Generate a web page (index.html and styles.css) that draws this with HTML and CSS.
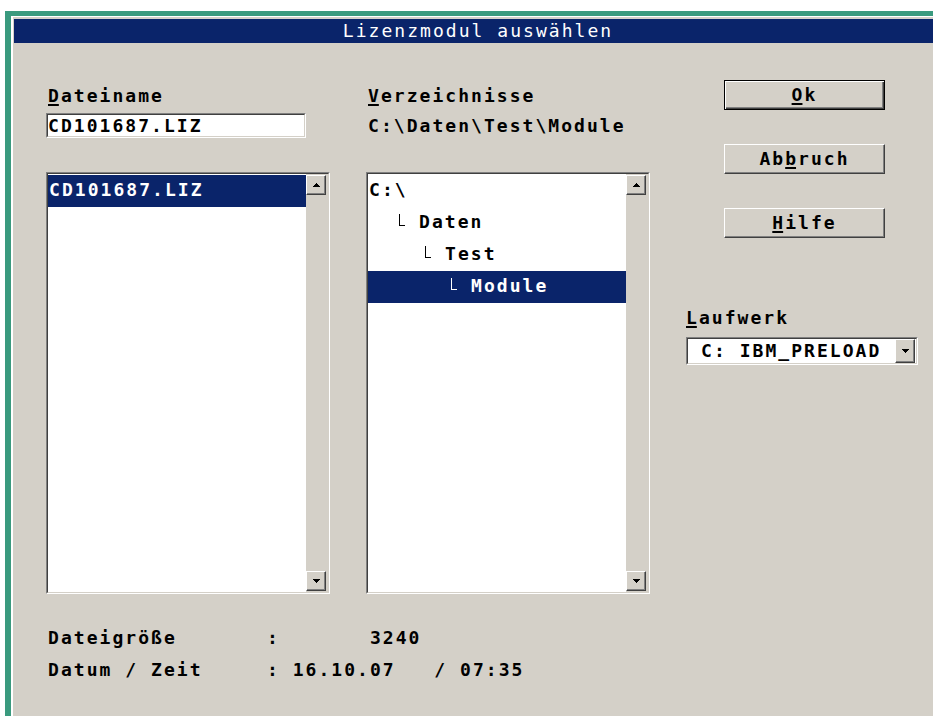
FILE: index.html
```html
<!DOCTYPE html>
<html lang="de">
<head>
<meta charset="utf-8">
<title>Lizenzmodul auswählen</title>
<link rel="stylesheet" href="styles.css">
</head>
<body>
<div class="window">
  <div class="frame">
    <div class="titlebar">Lizenzmodul auswählen</div>
    <div class="client">
      <div class="columns">
        <!-- file name + file list -->
        <div class="col">
          <div class="label"><u>D</u>ateiname</div>
          <div class="sunken edit"><div class="well edit-text">CD101687.LIZ</div></div>
          <div class="sunken listbox">
            <div class="well listbox-body">
              <ul class="items">
                <li class="item selected">CD101687.LIZ</li>
              </ul>
              <div class="vscroll">
                <span class="sbtn"><svg width="7" height="4" viewBox="0 0 7 4"><path d="M3 0h1v1h1v1h1v1h1v1H0V3h1V2h1V1h1z"/></svg></span>
                <span class="sbtn"><svg width="7" height="4" viewBox="0 0 7 4"><path d="M0 0h7v1H6v1H5v1H4v1H3V3H2V2H1V1H0z"/></svg></span>
              </div>
            </div>
          </div>
        </div>

        <!-- directory tree -->
        <div class="col">
          <div class="label"><u>V</u>erzeichnisse</div>
          <div class="path">C:\Daten\Test\Module</div>
          <div class="sunken listbox">
            <div class="well listbox-body">
              <ul class="items">
                <li class="item">C:\</li>
                <li class="item"><span class="branch lvl1"></span>Daten</li>
                <li class="item"><span class="branch lvl2"></span>Test</li>
                <li class="item selected"><span class="branch lvl3"></span>Module</li>
              </ul>
              <div class="vscroll">
                <span class="sbtn"><svg width="7" height="4" viewBox="0 0 7 4"><path d="M3 0h1v1h1v1h1v1h1v1H0V3h1V2h1V1h1z"/></svg></span>
                <span class="sbtn"><svg width="7" height="4" viewBox="0 0 7 4"><path d="M0 0h7v1H6v1H5v1H4v1H3V3H2V2H1V1H0z"/></svg></span>
              </div>
            </div>
          </div>
        </div>

        <!-- buttons + drive selector -->
        <div class="col side">
          <div class="btn default"><u>O</u>k</div>
          <div class="btn">Ab<u>b</u>ruch</div>
          <div class="btn"><u>H</u>ilfe</div>
          <div class="label drive-label"><u>L</u>aufwerk</div>
          <div class="sunken combo">
            <div class="well combo-body">
              <span class="combo-text">C: IBM_PRELOAD</span>
              <span class="sbtn cbtn"><svg width="7" height="4" viewBox="0 0 7 4"><path d="M0 0h7v1H6v1H5v1H4v1H3V3H2V2H1V1H0z"/></svg></span>
            </div>
          </div>
        </div>
      </div>

      <div class="info">
        <div class="line">Dateigröße       :       3240</div>
        <div class="line">Datum / Zeit     : 16.10.07   / 07:35</div>
      </div>
    </div>
  </div>
</div>
</body>
</html>
```
FILE: styles.css
```css
* {
  box-sizing: border-box;
}

html,
body {
  margin: 0;
}

body {
  width: 933px;
  height: 716px;
  overflow: hidden;
  background: #fff;
  color: #000;
  font-family: "DejaVu Sans Mono", monospace;
  font-size: 18px;
  font-weight: bold;
  letter-spacing: 2.04px;
}

/* dialog window with its green outer frame */
.window {
  margin: 11px 0 0 5px;
  width: 937px;
  height: 720px;
  border-top: 5px solid #3a9a7e;
  border-left: 6px solid #3a9a7e;
}

.frame {
  height: 100%;
  border-top: 1px solid #fff;
  border-left: 2px solid #fff;
  padding: 2px 0 0 1px;
  background: #d4d0c8;
}

.titlebar {
  height: 24px;
  line-height: 24px;
  background: #0a246a;
  color: #fff;
  font-weight: normal;
  text-align: center;
  white-space: nowrap;
}

.client {
  padding-left: 32px;
}

.columns {
  display: flex;
  align-items: flex-start;
  gap: 36px;
}

.col {
  width: 284px;
  padding-top: 45px;
  display: flex;
  flex-direction: column;
}

.col.side {
  width: 232px;
  padding-top: 37px;
}

.label {
  height: 16px;
  line-height: 16px;
  margin-left: 2px;
  white-space: nowrap;
}

/* mnemonic letters */
u {
  text-decoration-thickness: 2px;
  text-underline-offset: 2px;
  letter-spacing: 0;
  margin-right: 2.04px;
}

/* sunken 3D edge: outer and inner ring */
.sunken {
  border: 1px solid;
  border-color: #808080 #fff #fff #808080;
}

.well {
  height: 100%;
  border: 1px solid;
  border-color: #404040 #d4d0c8 #d4d0c8 #404040;
  background: #fff;
}

.edit {
  margin-top: 9px;
  width: 260px;
  height: 25px;
}

.edit-text {
  line-height: 21px;
  white-space: nowrap;
}

.path {
  margin-top: 9px;
  height: 25px;
  padding: 2px 0 0 2px;
  line-height: 21px;
  white-space: nowrap;
}

.listbox {
  margin-top: 34px;
  height: 422px;
}

.listbox-body {
  display: flex;
}

.items {
  flex: 1;
  list-style: none;
  margin: 0;
  padding: 1px 0 0;
}

.item {
  height: 32px;
  line-height: 29px;
  padding-left: 1px;
  white-space: nowrap;
}

.item.selected {
  background: #0a246a;
  color: #fff;
}

/* tree connector */
.branch {
  display: inline-block;
  width: 6px;
  height: 12px;
  margin: 0 14px 2px 0;
  border-left: 1px solid currentColor;
  border-bottom: 1px solid currentColor;
}

.branch.lvl1 { margin-left: 30px; }
.branch.lvl2 { margin-left: 56px; }
.branch.lvl3 { margin-left: 82px; }

.vscroll {
  width: 22px;
  padding: 1px 2px 1px 0;
  background: #d4d0c8;
  display: flex;
  flex-direction: column;
  justify-content: space-between;
}

/* raised 3D edge for small arrow buttons */
.sbtn {
  width: 20px;
  height: 20px;
  display: flex;
  align-items: center;
  justify-content: center;
  border: 1px solid;
  border-color: #fff #404040 #404040 #fff;
  box-shadow: inset -1px -1px #808080;
  background: #d4d0c8;
}

.sbtn svg {
  display: block;
  fill: #000;
}

.btn {
  margin-left: 38px;
  width: 161px;
  height: 30px;
  line-height: 27px;
  text-align: center;
  border: 1px solid;
  border-color: #fff #404040 #404040 #fff;
  box-shadow: inset -1px -1px #808080;
  background: #d4d0c8;
  white-space: nowrap;
}

.btn + .btn {
  margin-top: 34px;
}

.btn.default {
  border-color: #000;
  box-shadow: inset 1px 1px #fff, inset -1px -1px #404040, inset -2px -2px #808080;
}

.drive-label {
  margin: 72px 0 0 0;
}

.combo {
  margin-top: 11px;
  width: 232px;
  height: 28px;
}

.combo-body {
  display: flex;
  align-items: center;
}

.combo-text {
  flex: 1;
  padding-left: 13px;
  line-height: 24px;
  white-space: nowrap;
}

.cbtn {
  height: 24px;
  margin-right: 1px;
}

.info {
  margin: 28px 0 0 2px;
}

.info .line {
  line-height: 32px;
  white-space: pre;
}
```
